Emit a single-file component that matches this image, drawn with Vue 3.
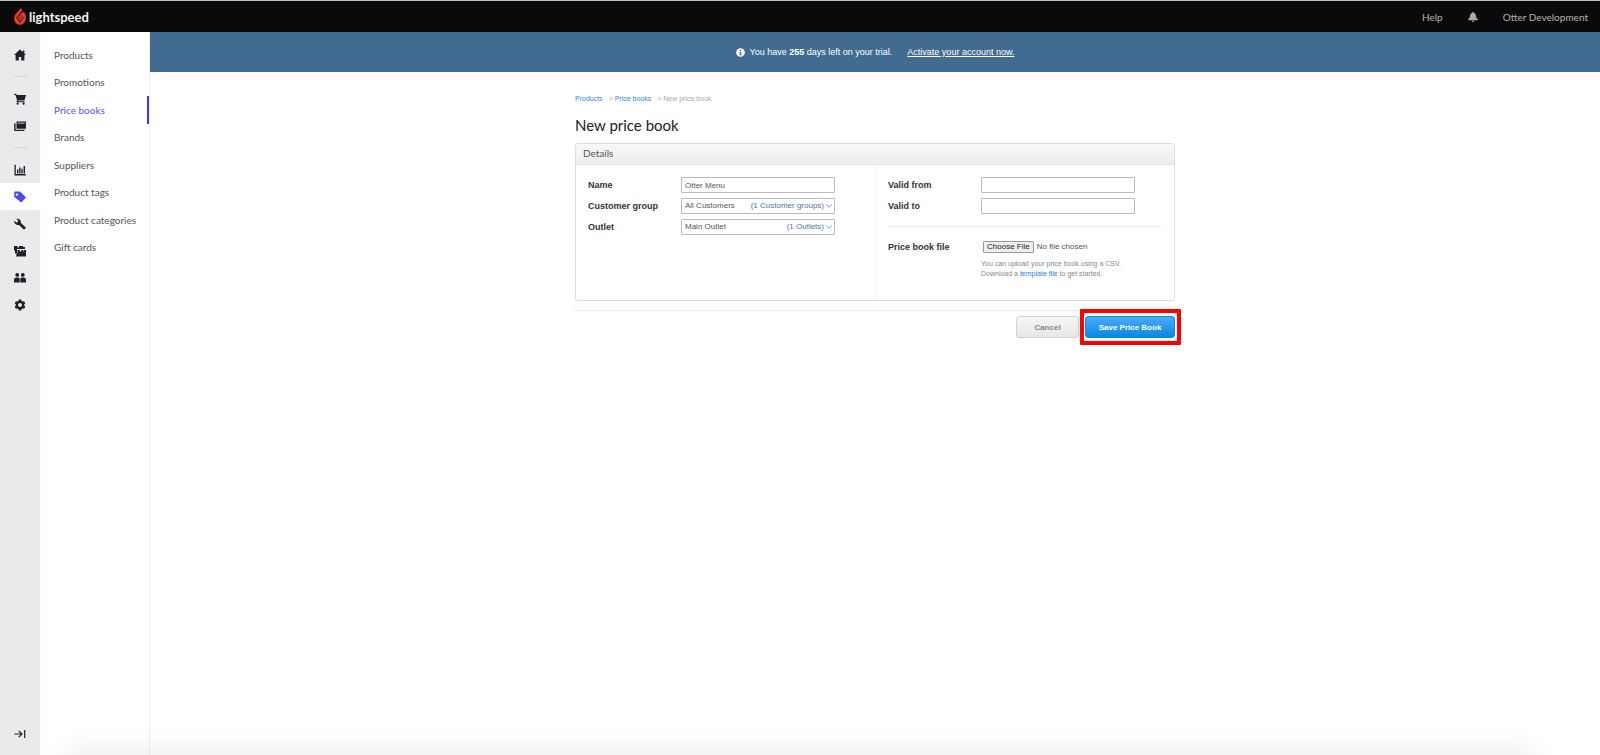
<script setup>
import { ref } from 'vue'

const links = ['Products', 'Promotions', 'Price books', 'Brands', 'Suppliers', 'Product tags', 'Product categories', 'Gift cards']
const active = 'Price books'

const groups = [
  [{ label: 'Home', d: 'M6 .6 0 6h1.6v5.4h3.2V8h2.4v3.4h3.2V6H12L10.4 4.5V1.6H8.8v1.5z' }],
  [
    { label: 'Sell', d: 'M0 .8h2.200l.5 1.200H12L10.400 7.600H4.200L4 8.300h6.600v1H2.600L3 7 1.300 1.800H0zM3.600 9.600a1.100 1.100 0 1 1 0 2.200 1.100 1.100 0 0 1 0-2.200zM9.600 9.600a1.100 1.100 0 1 1 0 2.200 1.100 1.100 0 0 1 0-2.200z' },
    { label: 'Register', d: 'M2.500 1.500H12v7.300H2.500zM.2 3.300h1.400v6.400h8.800v1.300H.2zM3.600 2.700v.8h7.200v-.8z' },
  ],
  [
    { label: 'Reporting', d: 'M.5.8h1.300v9.300H11.800v1.300H.5zM3 5.500h1.400v4H3zM5.200 3.600h1.400v5.900H5.200zM7.400 4.800h1.300v4.700H7.400zM9.600 2H11v7.500H9.600z' },
    { label: 'Catalog', d: 'M.3 1.400q0-.8.8-.8h5L12 6.600 7.300 11.600.3 6zM2.900 2.400a1.200 1.200 0 1 0 0 2.400 1.200 1.200 0 0 0 0-2.400z', active: true },
    { label: 'Setup', d: 'M.4 2.600 2.500 4.700 4.400 3 2.400 1C4.700.2 7.500 2 6.900 5L12 9.800 10 11.800 5 6.900C2.500 7.700-.4 5.400.4 2.600z' },
    { label: 'Store', d: 'M0 1h3.500v1.500H5V1h4v1h2v2H3v4.500H1V5.500H0zM3.500 5h2.300v1.500h1.500V5h2v1.500h.8V5H12v6.500H2.300V8h1.200z' },
    { label: 'Customers', d: 'M3.200 1a1.900 1.900 0 1 1 0 3.800 1.900 1.900 0 0 1 0-3.800zM8.800 1a1.900 1.900 0 1 1 0 3.800 1.900 1.900 0 0 1 0-3.800zM0 10.500V7.800Q0 5.800 2 5.600h2.400q1.300.2 1.300 1.700v3.200zM6.300 10.500V7.300q0-1.500 1.300-1.700H10q2 .2 2 2.200v2.700z' },
    { label: 'Settings', d: 'M4.800.5h2.400l.4 1.500 1 .6 1.500-.4 1.200 2-1.100 1.200v1.200l1.100 1.200-1.200 2-1.500-.4-1 .6-.4 1.500H4.800L4.400 10l-1-.6-1.500.4-1.200-2 1.100-1.200V5.400L.7 4.200l1.200-2 1.500.4 1-.6zM6 4a2 2 0 1 0 0 4 2 2 0 0 0 0-4z' },
  ],
]

const name = ref('Otter Menu')
const validFrom = ref('')
const validTo = ref('')
const pickers = [
  { id: 'customer-group', label: 'Customer group', value: 'All Customers', count: '(1 Customer groups)' },
  { id: 'outlet', label: 'Outlet', value: 'Main Outlet', count: '(1 Outlets)' },
]
</script>

<template>
  <div class="app">
    <header class="topbar">
      <a href="#" class="brand">
        <svg class="flame" viewBox="0 0 12 17" aria-hidden="true">
          <path d="M6.800 0 8.200 2.300 3.300 8.600 6 12.900 8 10 6.600 7.700 10 3.800 11.400 6.800Q12.800 10.600 10.700 14 8.800 17 6 17 3 17 1.200 14.200-.8 10.800.9 7.300z" fill="#ea3d2c" />
          <path d="M8.500 3.200 3.700 8.600 6 12.500 8 9.900 6.800 7.700 9.600 4.200" fill="#ea3d2c" />
          <path d="M8.800 3 4.700 8.300 6.200 10.800M7.800 7.600 9.400 10.100 6 14.600 1.900 8.600" fill="none" stroke="#0a0a0a" stroke-width=".7" />
        </svg>
        <span>lightspeed</span>
      </a>
      <nav class="account">
        <a href="#">Help</a>
        <button type="button" class="bell" aria-label="Notifications">
          <svg viewBox="0 0 10 10"><path d="M5 0q.8 0 .9.800Q8 1.500 8 4q0 2 1.700 3.300V8.200H.3v-.9Q2 6 2 4q0-2.500 2.100-3.200Q4.200 0 5 0zM3.700 8.800h2.600Q6 10 5 10T3.700 8.800z" fill="currentColor" /></svg>
        </button>
        <a href="#">Otter Development</a>
      </nav>
    </header>

    <div class="body">
      <aside class="rail">
        <ul v-for="(group, i) in groups" :key="i" class="group">
          <li v-for="item in group" :key="item.label">
            <a href="#" :aria-label="item.label" :class="{ active: item.active }">
              <svg viewBox="0 0 12 12"><path :d="item.d" fill="currentColor" fill-rule="evenodd" /></svg>
            </a>
          </li>
        </ul>
        <button type="button" class="expand" aria-label="Expand menu">
          <svg viewBox="0 0 12 12"><path d="M.5 6H8M4.800 2.800 8 6 4.800 9.200M10.700 2v8" fill="none" stroke="currentColor" stroke-width="1.200" /></svg>
        </button>
      </aside>

      <nav class="subnav">
        <ul>
          <li v-for="link in links" :key="link" :class="{ active: link === active }"><a href="#">{{ link }}</a></li>
        </ul>
      </nav>

      <div class="page">
        <div class="banner">
          <svg viewBox="0 0 10 10" aria-hidden="true">
            <circle cx="5" cy="5" r="4.800" fill="#fff" />
            <path d="M4.300 2h1.500v1.300H4.300zM3.800 4.200h2v2.900h.6V8H3.600v-.9h.7v-2h-.5z" fill="#426b91" />
          </svg>
          <span>You have <b>255</b> days left on your trial.</span>
          <a href="#">Activate your account now.</a>
        </div>

        <main>
          <nav class="crumbs" aria-label="Breadcrumb">
            <a href="#">Products</a><span class="step">&gt; <a href="#">Price books</a></span><span class="step">&gt; New price book</span>
          </nav>
          <h1>New price book</h1>

          <form @submit.prevent>
            <section class="card">
              <h2>Details</h2>
              <div class="columns">
                <div class="column">
                  <div class="row">
                    <label for="name">Name</label>
                    <input id="name" v-model="name" type="text" class="field">
                  </div>
                  <div v-for="p in pickers" :key="p.id" class="row">
                    <label :for="p.id">{{ p.label }}</label>
                    <div class="picker">
                      <select :id="p.id" class="field"><option>{{ p.value }}</option></select>
                      <span class="count">{{ p.count }}
                        <svg viewBox="0 0 6 6"><path d="M.2 1.500 3 4.300 5.800 1.500" fill="none" stroke="#777" stroke-width=".8" /></svg>
                      </span>
                    </div>
                  </div>
                </div>
                <div class="column right">
                  <div class="row">
                    <label for="valid-from">Valid from</label>
                    <input id="valid-from" v-model="validFrom" type="text" class="field">
                  </div>
                  <div class="row">
                    <label for="valid-to">Valid to</label>
                    <input id="valid-to" v-model="validTo" type="text" class="field">
                  </div>
                  <div class="row upload">
                    <label for="file">Price book file</label>
                    <div>
                      <input id="file" type="file" class="file">
                      <p>You can upload your price book using a CSV.<br>Download a <a href="#">template file</a> to get started.</p>
                    </div>
                  </div>
                </div>
              </div>
            </section>

            <div class="actions">
              <button type="button" class="btn">Cancel</button>
              <div class="save-wrap"><button type="submit" class="btn primary">Save Price Book</button></div>
            </div>
          </form>
        </main>
      </div>
    </div>
  </div>
</template>

<style>
body {
  margin: 0;
}
</style>

<style scoped>
* {
  box-sizing: border-box;
}
.app {
  position: relative;
  min-height: 100vh;
  display: flex;
  flex-direction: column;
  overflow: hidden;
  background: #fff;
  font-family: "Liberation Sans", Arial, sans-serif;
  color: #333;
}
.app::after {
  content: "";
  position: absolute;
  right: 70px;
  bottom: -10px;
  left: 70px;
  height: 10px;
  box-shadow: 0 0 28px 2px rgba(0, 0, 0, 0.12);
  pointer-events: none;
}
a {
  text-decoration: none;
}
ul {
  list-style: none;
  margin: 0;
  padding: 0;
}
button {
  font-family: inherit;
  cursor: pointer;
}
.topbar {
  height: 32px;
  display: flex;
  align-items: center;
  justify-content: space-between;
  padding: 0 12px 0 14px;
  background: #0a0a0a;
  border-top: 1px solid #b9c2bf;
}
.brand {
  display: flex;
  align-items: center;
  gap: 3px;
  color: #f4f4f4;
  font: 700 13px/16px Lato, sans-serif;
}
.flame {
  width: 12px;
  height: 17px;
}
.account {
  display: flex;
  align-items: center;
  font: 10px/16px Lato, sans-serif;
}
.account a {
  color: #b4b4b4;
}
.bell {
  display: flex;
  margin: 0 25px;
  padding: 0;
  border: 0;
  background: none;
  color: #aaa;
}
.bell svg {
  width: 10px;
  height: 10px;
}
.body {
  flex: 1;
  display: flex;
}
.rail {
  width: 40px;
  display: flex;
  flex-direction: column;
  padding: 9px 0 7px;
  background: #ebe9ec;
}
.group a {
  height: 27px;
  display: flex;
  align-items: center;
  justify-content: center;
  color: #202026;
}
.group a.active {
  background: #fff;
  color: #4b48f5;
}
.group + .group::before {
  content: "";
  display: block;
  width: 13px;
  height: 1px;
  margin: 8px auto;
  background: #d8d6da;
}
.rail svg {
  width: 12px;
  height: 12px;
}
.expand {
  display: flex;
  justify-content: center;
  margin-top: auto;
  padding: 8px 0;
  border: 0;
  background: none;
  color: #202026;
}
.subnav {
  width: 110px;
  padding-top: 9px;
  border-right: 1px solid #f0f0f0;
}
.subnav ul {
  height: 220px;
  display: flex;
  flex-direction: column;
}
.subnav li {
  flex: 1;
  display: flex;
  align-items: center;
  padding-left: 14px;
}
.subnav a {
  color: #555;
  font: 10px/16px Lato, sans-serif;
}
.subnav li.active {
  border-right: 2px solid #3a35f0;
}
.subnav li.active a {
  color: #5a50f2;
}
.page {
  flex: 1;
}
.banner {
  height: 40px;
  display: flex;
  align-items: center;
  justify-content: center;
  background: #426b91;
  color: #fff;
  font-size: 9px;
}
.banner svg {
  width: 9px;
  height: 9px;
  margin-right: 5px;
}
.banner a {
  margin-left: 15px;
  color: #fff;
  text-decoration: underline;
}
main {
  max-width: 600px;
  margin: 0 auto;
  padding-top: 22px;
}
.crumbs {
  color: #aaa;
  font-size: 7px;
  line-height: 10px;
}
.crumbs a {
  color: #3584e4;
}
.step {
  margin-left: 6px;
}
h1 {
  margin: 11px 0 8px;
  color: #222;
  font: 15px/20px Lato, sans-serif;
}
.card {
  height: 158px;
  border: 1px solid #dcdcdc;
  border-radius: 3px;
}
h2 {
  margin: 0;
  padding: 0 7px 2px;
  border-bottom: 1px solid #e4e4e6;
  background: linear-gradient(#f8f8f8, #eeeef0);
  color: #555;
  font: 10px/18px Lato, sans-serif;
}
.columns {
  height: 135px;
  display: grid;
  grid-template-columns: 1fr 1fr;
}
.column {
  display: flex;
  flex-direction: column;
  gap: 5px;
  padding: 12px;
}
.right {
  border-left: 1px solid #f3f3f3;
}
.row {
  display: flex;
}
.row label {
  width: 93px;
  color: #333;
  font-size: 9px;
  font-weight: 700;
  line-height: 16px;
}
.field {
  display: block;
  width: 154px;
  height: 16px;
  padding: 0 3px;
  appearance: none;
  border: 1px solid #bbb;
  border-radius: 1px;
  background: #fff;
  color: #555;
  font: 8px/14px "Liberation Sans", Arial, sans-serif;
}
.picker {
  position: relative;
}
.count {
  position: absolute;
  top: 0;
  right: 3px;
  display: flex;
  align-items: center;
  gap: 2px;
  color: #54759b;
  font-size: 8px;
  line-height: 16px;
  white-space: nowrap;
  pointer-events: none;
}
.count svg {
  width: 6px;
  height: 6px;
}
.upload {
  margin-top: 7px;
  padding-top: 12px;
  border-top: 1px dotted #ddd;
}
.file {
  display: block;
  width: 154px;
  height: 16px;
  padding: 2px;
  color: #555;
  font-size: 8px;
  line-height: 12px;
}
.file::file-selector-button {
  height: 12px;
  margin: 0 3px 0 0;
  padding: 0 3px;
  border: 1px solid #999;
  border-radius: 1px;
  background: #eee;
  color: #222;
  font: 8px/10px "Liberation Sans", Arial, sans-serif;
}
.upload p {
  margin: 4px 0 0;
  color: #888;
  font-size: 7px;
  line-height: 10px;
  white-space: nowrap;
}
.upload p a {
  color: #2f80dd;
}
.actions {
  display: flex;
  justify-content: flex-end;
  align-items: flex-start;
  margin-top: 9px;
  border-top: 1px dotted #ddd;
}
.btn {
  width: 63px;
  height: 22px;
  margin-top: 5px;
  border: 1px solid #d2d2d2;
  border-radius: 3px;
  background: linear-gradient(#f6f6f6, #e6e6e6);
  color: #888;
  font-size: 8px;
  font-weight: 700;
}
.save-wrap {
  margin: -2px -6px 0 1px;
  padding: 3px 2px 3px 1px;
  border: 4px solid #fe0000;
  border-radius: 1px;
}
.primary {
  display: block;
  width: 90px;
  margin: 0;
  border-color: #1585dc;
  background: linear-gradient(#4aabf7, #0988e4);
  color: #fff;
}
</style>
